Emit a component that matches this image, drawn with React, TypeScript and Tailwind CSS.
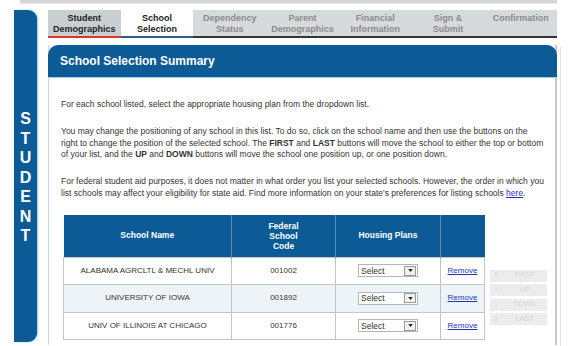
const tabs = [
  { a: 'Student', b: 'Demographics', state: 'done' },
  { a: 'School', b: 'Selection', state: 'current' },
  { a: 'Dependency', b: 'Status', state: 'todo' },
  { a: 'Parent', b: 'Demographics', state: 'todo' },
  { a: 'Financial', b: 'Information', state: 'todo' },
  { a: 'Sign &', b: 'Submit', state: 'todo' },
  { a: 'Confirmation', b: '', state: 'todo' },
];

const schools = [
  { name: 'ALABAMA AGRCLTL & MECHL UNIV', code: '001002' },
  { name: 'UNIVERSITY OF IOWA', code: '001892' },
  { name: 'UNIV OF ILLINOIS AT CHICAGO', code: '001776' },
];

const moves = [
  { label: 'FIRST', arrow: '⇑' },
  { label: 'UP', arrow: '↑' },
  { label: 'DOWN', arrow: '↓' },
  { label: 'LAST', arrow: '⇓' },
];

function SelectBox() {
  return (
    <div className="flex items-center w-[60px] h-[13px] border border-[#b5b5b5] bg-white">
      <span className="flex-1 pl-[2px] text-[8.5px] text-[#333] leading-none">Select</span>
      <span className="flex items-center justify-center w-[12px] h-[10px] mr-[1px] border border-[#999] bg-[#f0f0f0]">
        <svg width="5" height="3" viewBox="0 0 6 4">
          <path d="M0 0 L6 0 L3 4 Z" fill="#222" />
        </svg>
      </span>
    </div>
  );
}

export default function App() {
  return (
    <div className="relative w-[578px] h-[346px] bg-white overflow-hidden font-['Liberation_Sans',Arial,sans-serif] text-[#333]">
      {/* remains of panel above */}
      <div className="ml-[20px] w-[537px] h-[4px] bg-[#d6d6d6] border-b border-[#e8e8e8]" />

      <div className="flex mt-[6px]">
        {/* student sidebar */}
        <div className="ml-[14px] w-[23px] h-[332px] bg-[#0c5b96] rounded-tr-[9px] rounded-br-[9px] shadow-[1px_0_2px_#9cc3e0] flex flex-col items-center pt-[99px]">
          {'STUDENT'.split('').map((c, i) => (
            <span key={i} className="text-white font-bold text-[16px] leading-[19.5px]">{c}</span>
          ))}
        </div>

        {/* main panel */}
        <div className="ml-[11px] w-[509px] flex flex-col">
          <div className="flex h-[28px]">
            {tabs.map((t, i) => (
              <div
                key={i}
                className={`flex-1 flex flex-col items-center pt-[3px] text-[9px] font-bold leading-[10.5px] border-b-2 ${
                  t.state === 'done'
                    ? 'bg-[#c9ced1] text-[#222] border-[#d83a2a]'
                    : t.state === 'current'
                    ? 'bg-white text-[#222] border-[#2c5f86]'
                    : 'bg-[#d7dadc] text-[#8a8a8a] border-[#3a3430]'
                }`}
              >
                <span>{t.a}</span>
                {t.b && <span>{t.b}</span>}
              </div>
            ))}
          </div>

          <div className="mt-[7px] border-l border-r-2 border-l-[#c5d9ea] border-r-[#c9c9c9] h-[300px]">
            <div className="h-[33px] bg-[#0c5b96] rounded-t-[10px] border-b border-[#a9cbe6] flex items-center pl-[12px] -ml-px -mr-[2px]">
              <span className="text-white font-bold text-[12px]">School Selection Summary</span>
            </div>

            <div className="pl-[12px] pt-[21px] text-[8.5px] leading-[11.5px] text-[#333] whitespace-nowrap">
              <p>For each school listed, select the appropriate housing plan from the dropdown list.</p>
              <p className="mt-[15.5px]">
                You may change the positioning of any school in this list. To do so, click on the school name and then use the buttons on the
                <br />
                right to change the position of the selected school. The <b>FIRST</b> and <b>LAST</b> buttons will move the school to either the top or bottom
                <br />
                of your list, and the <b>UP</b> and <b>DOWN</b> buttons will move the school one position up, or one position down.
              </p>
              <p className="mt-[15.5px]">
                For federal student aid purposes, it does not matter in what order you list your selected schools. However, the order in which you
                <br />
                list schools may affect your eligibility for state aid. Find more information on your state's preferences for listing schools{' '}
                <span className="text-[#2233bb] underline">here</span>.
              </p>
            </div>

            <div className="flex items-end mt-[16px] ml-[14px]">
              <table className="w-[422px] border-collapse text-[8px] text-[#333]">
                <thead>
                  <tr className="bg-[#0c5b96] text-white h-[42px] font-bold">
                    <th className="w-[168px] border-r border-[#5a8cb6] font-bold text-[8.5px]">School Name</th>
                    <th className="w-[104px] border-r border-[#5a8cb6] font-bold text-[8.5px] leading-[10px]">
                      Federal<br />School<br />Code
                    </th>
                    <th className="w-[105px] border-r border-[#5a8cb6] font-bold text-[8.5px]">Housing Plans</th>
                    <th />
                  </tr>
                </thead>
                <tbody>
                  {schools.map((s, i) => (
                    <tr key={s.code} className={`h-[27.5px] ${i === 1 ? 'bg-[#eef3f8]' : 'bg-white'}`}>
                      <td className="border border-[#c4c4c4] text-center">{s.name}</td>
                      <td className="border border-[#c4c4c4] text-center">{s.code}</td>
                      <td className="border border-[#c4c4c4]">
                        <div className="flex justify-center"><SelectBox /></div>
                      </td>
                      <td className="border border-[#c4c4c4] text-center">
                        <span className="text-[#2233bb] underline">Remove</span>
                      </td>
                    </tr>
                  ))}
                </tbody>
              </table>

              <div className="ml-[5px] mb-[15px] flex flex-col gap-[2.5px]">
                {moves.map(m => (
                  <div key={m.label} className="flex items-center w-[57px] h-[12px] bg-[#ececec] text-[#d6d6d6] text-[7px]">
                    <span className="w-[12px] text-center">{m.arrow}</span>
                    <span className="flex-1 text-center">{m.label}</span>
                  </div>
                ))}
              </div>
            </div>
          </div>
        </div>

        <div className="ml-[3px] mt-[37px] w-px h-[300px] bg-[#e2e2e2]" />
      </div>
    </div>
  );
}
